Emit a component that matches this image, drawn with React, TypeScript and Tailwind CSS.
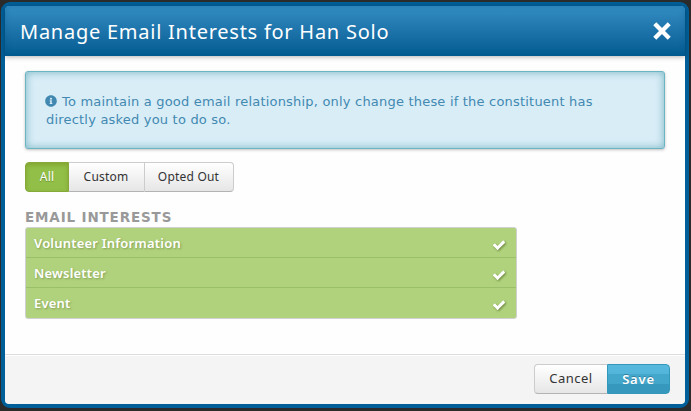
import { FaInfoCircle } from "react-icons/fa";

const interests = ["Volunteer Information", "Newsletter", "Event"];

function CloseIcon() {
  return (
    <svg width="18" height="18" viewBox="0 0 18 18" className="mb-px">
      <path d="M3.3 3.3 14.7 14.7M14.7 3.3 3.3 14.7" stroke="#fff" strokeWidth="4.3" strokeLinecap="square" />
    </svg>
  );
}

function CheckIcon() {
  return (
    <svg
      viewBox="0 0 1792 1792"
      fill="currentColor"
      className="mt-2.5 size-[14px] drop-shadow-[1px_1px_1px_rgba(60,80,20,0.6)]"
    >
      <path d="M1671 566q0 40-28 68l-724 724-136 136q-28 28-68 28t-68-28l-136-136-362-362q-28-28-28-68t28-68l136-136q28-28 68-28t68 28l294 295 656-657q28-28 68-28t68 28l136 136q28 28 28 68z" />
    </svg>
  );
}

function Header() {
  return (
    <div className="relative flex h-[50px] shrink-0 items-center justify-between rounded-t bg-gradient-to-b from-[#338dc4] to-[#005b91] pr-[14px] pl-[15px] text-white shadow-[inset_0_0_6px_rgba(0,80,130,0.3),0_1px_5px_rgba(0,0,0,0.3)]">
      <h3 className="pt-px text-[20px] leading-[50px] tracking-[0.75px] whitespace-nowrap">
        Manage Email Interests for Han Solo
      </h3>
      <CloseIcon />
    </div>
  );
}

function Notice() {
  return (
    <div className="h-[78px] w-[640px] rounded-[3px] border border-[#6bb4c2] bg-[#d9edf7] pt-[21px] pl-5 font-['DejaVu_Sans',sans-serif] text-[13px] leading-[18px] tracking-[0.2px] text-[#4289b1] shadow-[inset_0_0_8px_rgba(80,160,175,0.7),0_1px_3px_rgba(0,0,0,0.25)]">
      <p className="whitespace-nowrap">
        <FaInfoCircle className="mr-[5px] -ml-px inline size-3 align-[-1px]" />
        To maintain a good email relationship, only change these if the constituent has
      </p>
      <p className="whitespace-nowrap">directly asked you to do so.</p>
    </div>
  );
}

function Filters() {
  return (
    <div className="mt-[13px] flex h-[30px] text-[12px] tracking-[0.2px] text-[#333]">
      <button className="w-11 rounded-l border border-[#86a93c] bg-[#91bf47] text-white shadow-[inset_0_2px_4px_rgba(110,130,20,0.45)] [text-shadow:0_1px_1px_rgba(0,0,0,0.25)]">
        All
      </button>
      <button className="w-[75px] border-y border-[#ccc] border-b-[#b3b3b3] bg-gradient-to-b from-white to-[#e6e6e6] pr-px">
        Custom
      </button>
      <button className="w-[90px] rounded-r border border-[#ccc] border-b-[#b3b3b3] bg-gradient-to-b from-white to-[#e6e6e6] pr-px">
        Opted Out
      </button>
    </div>
  );
}

export default function App() {
  return (
    <div className="h-[411px] w-[691px] bg-[#2b2b2b] pt-[2px] pl-px font-['Noto_Sans',sans-serif]">
      <div className="flex h-[406px] w-[688px] flex-col rounded-[9px] border-4 border-[#005f99] bg-[#fefefe]">
        <Header />
        <div className="flex-1 px-5 pt-[15px]">
          <Notice />
          <Filters />
          <h4 className="mt-4 h-[19px] font-['DejaVu_Sans',sans-serif] text-[13.5px] leading-[19px] font-bold tracking-[0.85px] text-[#999]">
            EMAIL INTERESTS
          </h4>
          <ul className="h-[92px] w-[492px] overflow-hidden rounded-[3px] border border-[#d0d0d0] bg-[#b0d27c] text-[13px] leading-[30px] font-semibold tracking-[0.2px] text-white">
            {interests.map((name) => (
              <li
                key={name}
                className="flex h-[30px] items-start justify-between border-b border-[#9abf6b] pr-2.5 pl-2 last:border-b-0"
              >
                <span className="[text-shadow:1px_1px_2px_rgba(90,110,50,0.5)]">{name}</span>
                <CheckIcon />
              </li>
            ))}
          </ul>
        </div>
        <div className="flex h-[50px] shrink-0 justify-end rounded-b border-t border-[#ddd] bg-[#f4f4f4] pt-[9px] pr-[15px] shadow-[inset_0_1px_0_#fff]">
          <button className="h-[30px] w-[73px] rounded-l border border-r-0 border-[#ccc] border-b-[#b3b3b3] bg-gradient-to-b from-white to-[#e6e6e6] text-[13px] tracking-[0.5px] text-[#333]">
            Cancel
          </button>
          <button className="h-[30px] w-[63px] rounded-r border border-[#3498bb] bg-[linear-gradient(#58b9de_0,#54b5da_32%,#43a7cb_33%,#43a7cb_66%,#3598bc_67%,#3598bc_100%)] pt-px text-[13px] font-semibold tracking-[0.8px] text-white [text-shadow:0_-1px_0_rgba(0,0,0,0.25)]">
            Save
          </button>
        </div>
      </div>
    </div>
  );
}
